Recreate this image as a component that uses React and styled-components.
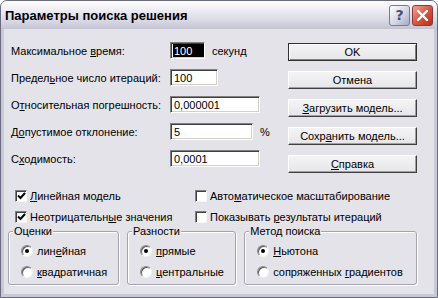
import React from 'react';
import styled, { createGlobalStyle } from 'styled-components';

const GlobalStyle = createGlobalStyle`
  html, body {
    margin: 0;
    padding: 0;
    background: #ffffff;
  }
  body {
    font-family: "Liberation Sans", Arial, sans-serif;
  }
`;

const Window = styled.div`
  width: 438px;
  height: 298px;
  box-sizing: border-box;
  display: flex;
  flex-direction: column;
  background: #c8c8d6;
  border: 1px solid #6a6a80;
  border-radius: 7px 7px 0 0;
  overflow: hidden;
`;

const TitleBar = styled.div`
  height: 28px;
  flex: none;
  display: flex;
  align-items: center;
  gap: 2px;
  padding: 0 4px 0 4px;
  background: linear-gradient(#ffffff, #eeeef4 30%, #d9d9e5 70%, #c3c3d3);
`;

const Title = styled.div`
  flex: 1;
  font: bold 13px "Liberation Sans", Arial, sans-serif;
  color: #000;
`;

const CaptionButton = styled.div`
  width: 21px;
  height: 21px;
  box-sizing: border-box;
  display: flex;
  align-items: center;
  justify-content: center;
  border-radius: 3px;
  border: 1px solid ${({ close }) => (close ? '#8c3b36' : '#7a7a98')};
  background: ${({ close }) =>
    close
      ? 'linear-gradient(135deg, #f0a896, #d4523c 55%, #b8301f)'
      : 'linear-gradient(135deg, #ffffff, #d6d6e4 55%, #a9a9c2)'};
  font: bold 14px "DejaVu Sans", sans-serif;
  color: #4c4c72;
`;

const Body = styled.div`
  flex: 1;
  margin: 0 3px 3px;
  background: #e4e3ea;
  display: flex;
  flex-direction: column;
  padding: 13px 17px 8px 4px;
  font-size: 11px;
  color: #000;
`;

const TopSection = styled.div`
  display: flex;
  justify-content: space-between;
  align-items: flex-start;
`;

const Fields = styled.div`
  display: flex;
  flex-direction: column;
  gap: 10px;
  padding-left: 3px;
`;

const FieldRow = styled.div`
  display: flex;
  align-items: center;
  height: 17px;
`;

const Label = styled.span`
  width: 159px;
`;

const Input = styled.div`
  width: ${({ w }) => w}px;
  height: 17px;
  box-sizing: border-box;
  display: flex;
  align-items: center;
  padding-left: 2px;
  background: #fff;
  border: 1px solid;
  border-color: #808080 #ffffff #ffffff #808080;
  box-shadow: inset 1px 1px 0 #404040, inset -1px -1px 0 #d4d0c8;
`;

const InputText = styled.span`
  display: flex;
  align-items: center;
  padding-left: 1px;
  height: 13px;
  ${({ selected }) => selected && 'flex: 1; background: #000; color: #fff;'}
`;

const Suffix = styled.span`
  margin-left: 7px;
`;

const Buttons = styled.div`
  display: flex;
  flex-direction: column;
  gap: 10px;
  margin-top: 1px;
  width: 129px;
`;

const Button = styled.div`
  height: 18px;
  box-sizing: border-box;
  display: flex;
  align-items: center;
  justify-content: center;
  background: linear-gradient(#f4f4f6, #e6e6ea);
  border: 1px solid;
  border-color: ${({ primary }) =>
    primary ? '#303030' : '#ffffff #404040 #404040 #ffffff'};
  box-shadow: ${({ primary }) =>
    primary
      ? 'inset 1px 1px 0 #ffffff, inset -1px -1px 0 #808080'
      : 'inset -1px -1px 0 #a0a0a0'};
`;

const Checks = styled.div`
  display: grid;
  grid-template-columns: 180px 1fr;
  row-gap: 6px;
  margin-top: 15px;
  padding-left: 7px;
`;

const CheckRow = styled.label`
  display: flex;
  align-items: center;
  gap: 3px;
  height: 15px;
`;

const Box = styled.span`
  width: 12px;
  height: 12px;
  box-sizing: border-box;
  display: flex;
  align-items: center;
  justify-content: center;
  background: #fff;
  border: 1px solid;
  border-color: #808080 #f6f6f6 #f6f6f6 #808080;
  box-shadow: inset 1px 1px 0 #404040;
`;

const Groups = styled.div`
  display: flex;
  gap: 8px;
  margin-top: 1px;
`;

const Group = styled.fieldset`
  width: ${({ w }) => w}px;
  height: 60px;
  box-sizing: border-box;
  margin: 0;
  padding: 0 0 0 12px;
  border: 1px solid #a4a4b0;
  border-radius: 3px;
  box-shadow: inset 1px 1px 0 #ffffff, 1px 1px 0 #ffffff;
  display: flex;
  flex-direction: column;
  gap: 6px;
`;

const Legend = styled.legend`
  padding: 0 1px;
  margin-left: -8px;
  line-height: 13px;
  background: #e4e3ea;
`;

const RadioRow = styled.div`
  display: flex;
  align-items: center;
  gap: 4px;
  height: 15px;
  &:first-of-type {
    margin-top: 5px;
  }
`;

const Radio = styled.span`
  width: 12px;
  height: 12px;
  box-sizing: border-box;
  border-radius: 50%;
  display: flex;
  align-items: center;
  justify-content: center;
  background: radial-gradient(circle at 65% 65%, #ffffff 45%, #e6e6e6);
  border: 1px solid;
  border-color: #8a8a8a #f4f4f4 #f4f4f4 #8a8a8a;
  box-shadow: inset 1px 1px 0 #5c5c5c;
  &::after {
    content: '';
    display: ${({ checked }) => (checked ? 'block' : 'none')};
    width: 4px;
    height: 4px;
    border-radius: 50%;
    background: #000;
  }
`;

const Check = () => (
  <svg width="9" height="8" viewBox="0 0 9 8">
    <path d="M1 3.5 L3.5 6 L8 1" fill="none" stroke="#000" strokeWidth="2" />
  </svg>
);

const Ul = styled.u`
  text-decoration: underline;
`;

const fields = [
  { label: <>Максимальное <Ul>в</Ul>ремя:</>, value: '100', w: 35, selected: true, suffix: 'секунд' },
  { label: <>Предел<Ul>ь</Ul>ное число итераций:</>, value: '100', w: 48 },
  { label: <>О<Ul>т</Ul>носительная погрешность:</>, value: '0,000001', w: 90 },
  { label: <>Д<Ul>о</Ul>пустимое отклонение:</>, value: '5', w: 83, suffix: '%' },
  { label: <>С<Ul>х</Ul>одимость:</>, value: '0,0001', w: 90 },
];

const buttons = [
  { text: 'OK', primary: true },
  { text: 'Отмена' },
  { text: <><Ul>З</Ul>агрузить модель...</> },
  { text: <>Сохр<Ul>а</Ul>нить модель...</> },
  { text: <><Ul>С</Ul>правка</> },
];

const checks = [
  { text: <><Ul>Л</Ul>инейная модель</>, checked: true },
  { text: <>Авто<Ul>м</Ul>атическое масштабирование</> },
  { text: <>Неотрицательн<Ul>ы</Ul>е значения</>, checked: true },
  { text: <>Показывать <Ul>р</Ul>езультаты итераций</> },
];

const groups = [
  { title: 'Оценки', w: 113, options: [<>лин<Ul>е</Ul>йная</>, <><Ul>к</Ul>вадратичная</>] },
  { title: 'Разности', w: 111, options: [<><Ul>п</Ul>рямые</>, <><Ul>ц</Ul>ентральные</>] },
  { title: 'Метод поиска', w: 176, options: [<><Ul>Н</Ul>ьютона</>, <>сопряженных <Ul>г</Ul>радиентов</>] },
];

export default function App() {
  return (
    <>
      <GlobalStyle />
      <Window>
        <TitleBar>
          <Title>Параметры поиска решения</Title>
          <CaptionButton>?</CaptionButton>
          <CaptionButton close>
            <svg width="13" height="13" viewBox="0 0 13 13">
              <path d="M2 2 L11 11 M11 2 L2 11" stroke="#fff" strokeWidth="2.4" strokeLinecap="round" />
            </svg>
          </CaptionButton>
        </TitleBar>
        <Body>
          <TopSection>
            <Fields>
              {fields.map((f, i) => (
                <FieldRow key={i}>
                  <Label>{f.label}</Label>
                  <Input w={f.w}>
                    <InputText selected={f.selected}>{f.value}</InputText>
                  </Input>
                  {f.suffix && <Suffix>{f.suffix}</Suffix>}
                </FieldRow>
              ))}
            </Fields>
            <Buttons>
              {buttons.map((b, i) => (
                <Button key={i} primary={b.primary}>{b.text}</Button>
              ))}
            </Buttons>
          </TopSection>
          <Checks>
            {checks.map((c, i) => (
              <CheckRow key={i}>
                <Box>{c.checked && <Check />}</Box>
                <span>{c.text}</span>
              </CheckRow>
            ))}
          </Checks>
          <Groups>
            {groups.map((g) => (
              <Group key={g.title} w={g.w}>
                <Legend>{g.title}</Legend>
                {g.options.map((o, i) => (
                  <RadioRow key={i}>
                    <Radio checked={i === 0} />
                    <span>{o}</span>
                  </RadioRow>
                ))}
              </Group>
            ))}
          </Groups>
        </Body>
      </Window>
    </>
  );
}
